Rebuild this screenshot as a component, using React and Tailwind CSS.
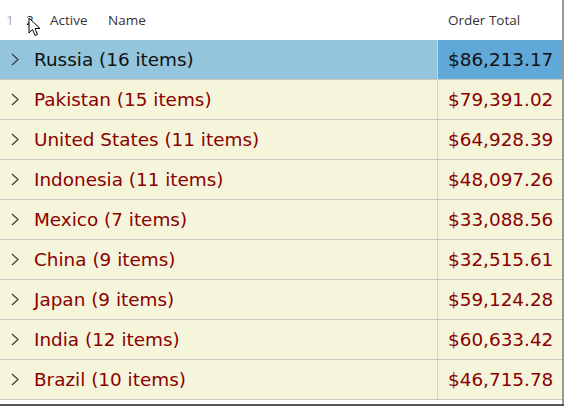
import React from 'react'

const rows = [
  { name: 'Russia', count: 16, total: '$86,213.17' },
  { name: 'Pakistan', count: 15, total: '$79,391.02' },
  { name: 'United States', count: 11, total: '$64,928.39' },
  { name: 'Indonesia', count: 11, total: '$48,097.26' },
  { name: 'Mexico', count: 7, total: '$33,088.56' },
  { name: 'China', count: 9, total: '$32,515.61' },
  { name: 'Japan', count: 9, total: '$59,124.28' },
  { name: 'India', count: 12, total: '$60,633.42' },
  { name: 'Brazil', count: 10, total: '$46,715.78' },
]

const Chevron = () => (
  <svg width="8" height="13" viewBox="0 0 8 13" className="shrink-0">
    <path d="M1 1 L7 6.5 L1 12" fill="none" stroke="#333" strokeWidth="1.1" />
  </svg>
)

const Cursor = () => (
  <svg width="14" height="20" viewBox="0 0 14 20" className="absolute left-[28px] top-[17px]">
    <path d="M1 1 L1 16 L4.5 12.5 L7 18.5 L9.5 17.5 L7 11.5 L12 11.5 Z" fill="#fff" stroke="#000" strokeWidth="1" strokeLinejoin="round" />
  </svg>
)

export default function App() {
  return (
    <div className="w-[564px] h-[406px] bg-white overflow-hidden">
      <div className="w-[564px] h-[404px] border-r-2 border-[#9a9a9a] flex flex-col">
        <div className="relative h-[40px] shrink-0 flex items-center text-[13.5px] text-[#333] font-['Open_Sans',sans-serif]">
          <span className="ml-[6px] w-[20px] text-[#aaa]">1</span>
          <span className="w-[24px]">2</span>
          <span className="w-[58px]">Active</span>
          <span className="flex-1">Name</span>
          <span className="w-[114px]">Order Total</span>
          <Cursor />
        </div>
        <div className="font-['DejaVu_Sans',Verdana,sans-serif] text-[18.4px]">
          {rows.map((r, i) => {
            const sel = i === 0
            return (
              <div
                key={r.name}
                className={`h-[40px] flex border-b border-[#c9c9c0] ${sel ? 'bg-[#93c5dd] text-[#111]' : 'bg-[#f5f5dc] text-[#8b0000]'}`}
              >
                <div className="flex-1 flex items-center border-r border-[#d2d2c8] pl-[11px]">
                  <Chevron />
                  <span className="ml-[15px] pt-[1px]">{r.name} ({r.count} items)</span>
                </div>
                <div className={`w-[124px] flex items-center pl-[10px] pt-[1px] ${sel ? 'bg-[#5fa8d8]' : ''}`}>
                  {r.total}
                </div>
              </div>
            )
          })}
        </div>
      </div>
      <div className="h-[2px] bg-[#555]" />
    </div>
  )
}
